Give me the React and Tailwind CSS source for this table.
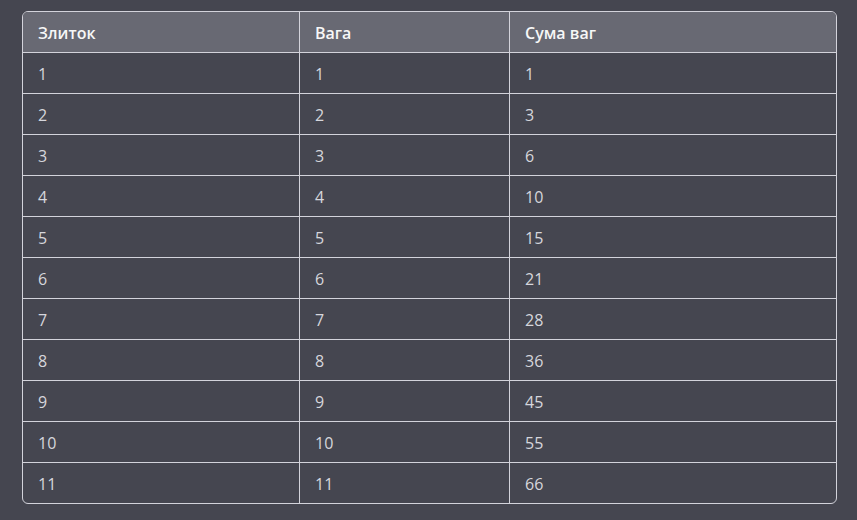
import React from "react";

const rows = [
  [1, 1, 1],
  [2, 2, 3],
  [3, 3, 6],
  [4, 4, 10],
  [5, 5, 15],
  [6, 6, 21],
  [7, 7, 28],
  [8, 8, 36],
  [9, 9, 45],
  [10, 10, 55],
  [11, 11, 66],
];

const colWidths = ["w-[277px] border-r", "w-[210px] border-r", "flex-1"];

const App = () => {
  return (
    <div
      className="min-h-screen w-full bg-[#454650] pt-[11px] pl-[22px]"
      style={{ fontFamily: '"Open Sans", "Noto Sans", sans-serif' }}
    >
      <div className="w-[815px] rounded-md border border-[#d3d3db] overflow-hidden">
        <div className="flex h-[41px] border-b border-[#d3d3db] bg-[#686973] text-[#f7f7f7] font-semibold text-base">
          {["Злиток", "Вага", "Сума ваг"].map((h, i) => (
            <div key={h} className={`${colWidths[i]} border-[#d3d3db] flex items-center px-[15px] pt-px`}>
              {h}
            </div>
          ))}
        </div>
        {rows.map((row, r) => (
          <div
            key={r}
            className={`flex text-[#d6d6dc] text-base ${
              r === rows.length - 1 ? "h-10" : "h-[41px] border-b border-[#d3d3db]"
            }`}
          >
            {row.map((v, i) => (
              <div key={i} className={`${colWidths[i]} border-[#d3d3db] flex items-center px-[15px] pt-[2px]`}>
                {v}
              </div>
            ))}
          </div>
        ))}
      </div>
    </div>
  );
};

export default App;
